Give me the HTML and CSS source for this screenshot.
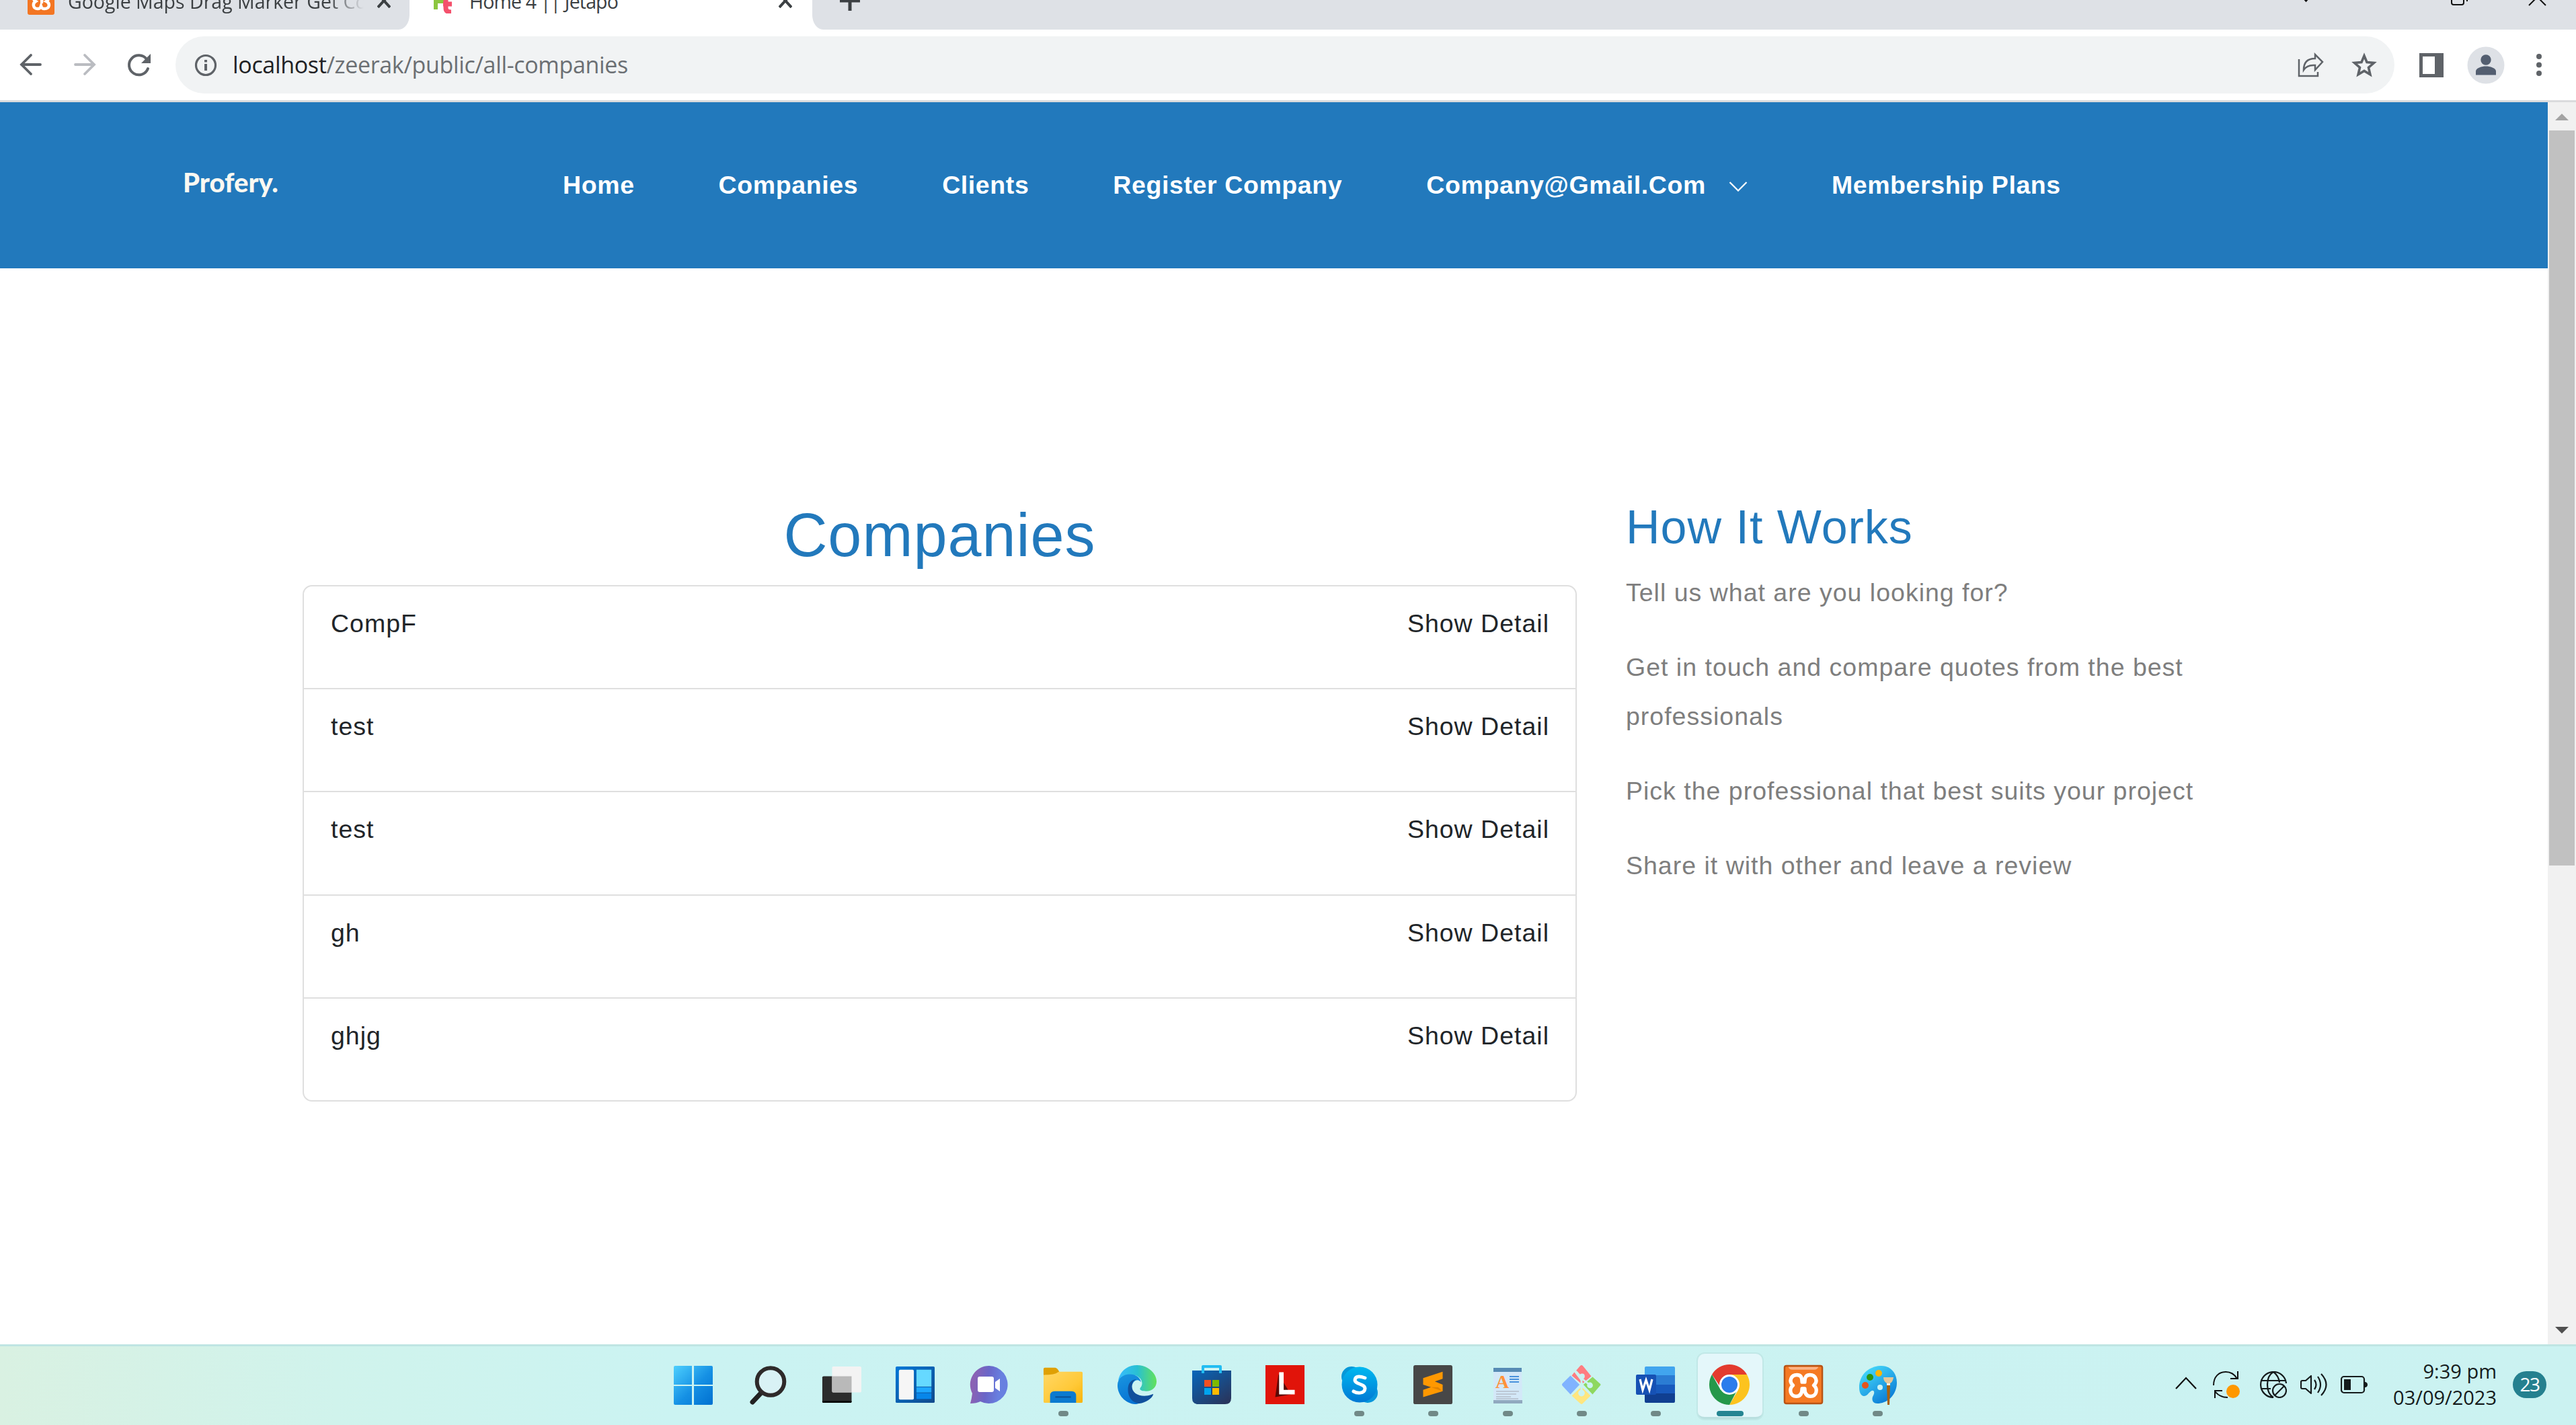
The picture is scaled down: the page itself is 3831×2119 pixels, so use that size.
FILE: index.html
```html
<!DOCTYPE html>
<html lang="en">
<head>
<meta charset="utf-8">
<title>Home 4 || Jetapo</title>
<link rel="stylesheet" href="styles.css">
</head>
<body>
<div class="screen">
  <div class="tabs">
    <div class="tab tab-first">
      <svg class="favicon" width="40" height="60" viewBox="0 0 40 60"><rect y="12" width="40" height="42" rx="3" fill="#f37623"/><path d="M19 35h2c1-8-1-12-6-12-7 0-8 8-3 11-5 3-4 11 3 11 3 0 4-1 5-4 1 3 2 4 5 4 8 0 9-8 3-11 5-3 4-11-3-11" fill="none" stroke="#fff" stroke-width="4.500"/></svg>
      <span class="tab-title fade">Google Maps Drag Marker Get Co</span>
      <svg class="tab-x" width="20" height="22" viewBox="0 0 20 22"><path d="M1 1l18 20M19 1L1 21" stroke="#3c4043" stroke-width="4"/></svg>
    </div>
    <div class="tab tab-active">
      <svg class="favicon jet" width="30" height="52" viewBox="0 0 30 52"><path d="M3 20v26M3 34h12" stroke="#8cc63f" stroke-width="6"/><path d="M18 18v26q0 6 8 6M14 38h13" fill="none" stroke="#f4516c" stroke-width="7"/></svg>
      <span class="tab-title">Home 4 || Jetapo</span>
      <svg class="tab-x" width="20" height="22" viewBox="0 0 20 22"><path d="M1 1l18 20M19 1L1 21" stroke="#3c4043" stroke-width="4"/></svg>
    </div>
    <div class="tab-rest">
      <svg class="plus" width="30" height="32" viewBox="0 0 30 32"><path d="M15 0v32M0 17h30" stroke="#3c4043" stroke-width="5"/></svg>
      <svg class="win-controls" width="360" height="10" viewBox="0 0 360 10"><path d="M0-4l4.500 5L9-4" fill="none" stroke="#111" stroke-width="3"/><path d="M221-5V4q0 3 3 3h12q3 0 3-3V-5M244-5V2" fill="none" stroke="#111" stroke-width="2"/><path d="M336 8L361-17M361 8L336-17" stroke="#111" stroke-width="2"/></svg>
    </div>
  </div>

  <div class="toolbar">
    <svg class="ico-back" width="34" height="34" viewBox="0 0 34 34"><path d="M31 17H3M17 3L3 17 17 31" fill="none" stroke="#5f6368" stroke-width="3.800" stroke-linecap="round"/></svg>
    <svg class="ico-fwd" width="34" height="34" viewBox="0 0 34 34"><path d="M3 17h28M17 3l14 14L17 31" fill="none" stroke="#babcc1" stroke-width="3.800" stroke-linecap="round"/></svg>
    <svg class="ico-reload" width="36" height="36" viewBox="0 0 36 36"><path d="M29 9A14.500 14.500 0 1 0 31 23" fill="none" stroke="#5f6368" stroke-width="4" stroke-linecap="round"/><path d="M35 1v14H21z" fill="#5f6368"/></svg>
    <div class="omnibox">
      <svg width="34" height="34" viewBox="0 0 34 34"><circle cx="17" cy="17" r="14.500" fill="none" stroke="#5f6368" stroke-width="3.200"/><path d="M17 15v10M17 9v3.500" stroke="#5f6368" stroke-width="4"/></svg>
      <span class="url"><b>localhost</b>/zeerak/public/all-companies</span>
      <svg class="ico-share" width="40" height="38" viewBox="0 0 40 38"><path d="M2 10v25h28v-6" fill="none" stroke="#5f6368" stroke-width="2.500"/><path d="M9 26Q9 9 26 9V3l11 11-11 12v-7Q14 18 9 26z" fill="none" stroke="#5f6368" stroke-width="2.500"/></svg>
      <svg class="ico-star" width="38" height="38" viewBox="0 0 38 38"><path d="M19 5l4 9.500 10.500 1-8 7 2.400 10.300L19 27.400l-8.900 5.400 2.400-10.300-8-7 10.500-1z" fill="none" stroke="#5f6368" stroke-width="3.600"/></svg>
    </div>
    <svg class="ico-panel" width="36" height="36" viewBox="0 0 36 36"><path d="M0 0h36v36H0zM5 5v26h18V5z" fill="#5f6368" fill-rule="evenodd"/></svg>
    <svg class="ico-user" width="56" height="56" viewBox="0 0 56 56"><circle cx="28" cy="28" r="27.500" fill="#dee1e6"/><circle cx="28" cy="20" r="7.700" fill="#535e70"/><path d="M13 42.500V37c0-5 9-7.500 15-7.500S43 32 43 37v5.500z" fill="#535e70"/></svg>
    <svg class="ico-menu" width="10" height="36" viewBox="0 0 10 36"><g fill="#5f6368"><circle cx="5" cy="5" r="4"/><circle cx="5" cy="17.500" r="4"/><circle cx="5" cy="30" r="4"/></g></svg>
  </div>

  <div class="viewport">
    <div class="page">
      <header class="site-header">
        <div class="logo">Profery.</div>
        <nav class="nav">
          <a>Home</a><a>Companies</a><a>Clients</a><a>Register Company</a>
          <a class="has-menu">Company@Gmail.Com<svg width="28" height="16" viewBox="0 0 28 16"><path d="M1.500 2L14 14.500 26.500 2" fill="none" stroke="#fff" stroke-width="2.200"/></svg></a>
          <a>Membership Plans</a>
        </nav>
      </header>
      <main class="content">
        <section class="companies">
          <h1>Companies</h1>
          <ul class="list">
            <li><span>CompF</span><a>Show Detail</a></li>
            <li><span>test</span><a>Show Detail</a></li>
            <li><span>test</span><a>Show Detail</a></li>
            <li><span>gh</span><a>Show Detail</a></li>
            <li><span>ghjg</span><a>Show Detail</a></li>
          </ul>
        </section>
        <aside class="how">
          <h2>How It Works</h2>
          <p>Tell us what are you looking for?</p>
          <p>Get in touch and compare quotes from the best professionals</p>
          <p>Pick the professional that best suits your project</p>
          <p>Share it with other and leave a review</p>
        </aside>
      </main>
    </div>
    <div class="scrollbar">
      <svg width="42" height="42" viewBox="0 0 42 42"><path d="M11 27L21 17l10 10z" fill="#a3a3a3"/></svg>
      <div class="thumb"></div>
      <svg class="down" width="42" height="42" viewBox="0 0 42 42"><path d="M11 16h20L21 26z" fill="#505050"/></svg>
    </div>
  </div>

  <div class="taskbar">
    <div class="apps">
      <div class="app"><svg viewBox="0 0 60 60"><defs><linearGradient id="win" x1="0" y1="0" x2="60" y2="60" gradientUnits="userSpaceOnUse"><stop offset="0" stop-color="#4fd2ff"/><stop offset=".55" stop-color="#1590e4"/><stop offset="1" stop-color="#0070d0"/></linearGradient></defs><path d="M3 2h25v28H1V4q0-2 2-2zM31 2h26q2 0 2 2v26H31zM1 32h27v28H3q-2 0-2-2zM31 32h28v26q0 2-2 2H31z" fill="url(#win)"/></svg></div>
      <div class="app"><svg viewBox="0 0 60 60"><path d="M23 40L8 56" stroke="#222" stroke-width="7" stroke-linecap="round"/><circle cx="35" cy="25.500" r="20.300" fill="#d9f2f5" stroke="#2e2a2a" stroke-width="6"/></svg></div>
      <div class="app"><svg viewBox="0 0 62 60"><rect x="2" y="17" width="45" height="41" rx="2" fill="#2c2c2c"/><path d="M2 55h45v1q0 2-2 2H4q-2 0-2-2z" fill="#080808"/><rect x="17" y="2" width="45" height="40" rx="2" fill="#f3f3f3"/><path d="M17 17h30v25H19q-2 0-2-2z" fill="#b9b9b9"/></svg></div>
      <div class="app"><svg viewBox="0 0 62 60"><defs><linearGradient id="wid" x2="1" y2="1"><stop stop-color="#0078d8"/><stop offset="1" stop-color="#124a8c"/></linearGradient></defs><rect x="1" y="2" width="60" height="56" rx="2" fill="url(#wid)"/><rect x="6" y="7" width="23" height="46" rx="2" fill="#f6f6f6"/><path d="M33 7h23v26H33z" fill="#66d9ff"/><path d="M33 34h23v8H33z" fill="#1ea7ff"/><path d="M33 43h23v9H33z" fill="#0786ea"/></svg></div>
      <div class="app"><svg viewBox="0 0 60 60"><defs><linearGradient id="chat" x1=".1" y1=".4" x2=".8" y2=".5"><stop stop-color="#8a62b4"/><stop offset=".5" stop-color="#6a66c8"/><stop offset="1" stop-color="#6880e0"/></linearGradient></defs><path d="M30 2a28 28 0 1 1-13 53q-6 3-15 3 2-7 3-15A28 28 0 0 1 30 2z" fill="url(#chat)"/><rect x="13" y="18" width="24" height="23" rx="3" fill="#fff"/><path d="M39 26l7-5v19l-7-5z" fill="#fff"/></svg></div>
      <div class="app run"><svg viewBox="0 0 62 60"><defs><linearGradient id="fold" x2="1" y2="1"><stop stop-color="#ffd766"/><stop offset=".6" stop-color="#ffc938"/><stop offset="1" stop-color="#f8b40c"/></linearGradient></defs><path d="M1 6q0-2 2-2h15q4 0 7 6v9H1z" fill="#dfa004"/><path d="M1 15q18 0 22-4 1-1 3-1h33q2 0 2 2v44q0 2-2 2H3q-2 0-2-2z" fill="url(#fold)"/><path d="M11 58V47q0-7 7-7h26q7 0 7 7v11z" fill="#0b7ad0"/><path d="M19 49h24" stroke="#0b4f94" stroke-width="2"/></svg></div>
      <div class="app"><svg viewBox="0 0 62 60"><defs><linearGradient id="eg" x2="1"><stop stop-color="#38bcff"/><stop offset=".5" stop-color="#29c0d2"/><stop offset="1" stop-color="#63e25a"/></linearGradient><linearGradient id="eb" x2=".4" y2="1"><stop stop-color="#1a96e0"/><stop offset="1" stop-color="#0673d3"/></linearGradient></defs><path d="M2 24C5 8 17 0 31 0c17 0 30 13 30 25 0 9-7 15-16 15-7 0-11-2-9-5 7-8 0-20-13-20C14 15 6 19 2 24z" fill="url(#eg)"/><path d="M1 31C1 20 10 14 20 14c9 0 16 5 17 12-5-7-14-1-14 8 0 12 11 21 22 18-6 6-12 8-17 8C13 59 1 46 1 31z" fill="url(#eb)"/><path d="M30 22c-8 0-13 6-13 15 0 13 7 21 17 22 11-1 20-8 22-14q0-1-2 0c-15 6-31 0-31-13q1-8 7-10z" fill="#10509c"/></svg></div>
      <div class="app"><svg viewBox="0 0 60 60"><defs><linearGradient id="st" x2=".8" y2="1"><stop stop-color="#0767bb"/><stop offset="1" stop-color="#28365e"/></linearGradient></defs><path d="M2 9h58v41q0 9-9 9H11q-9 0-9-9z" fill="url(#st)"/><path d="M18 13V3h26v10" fill="none" stroke="#22bdf2" stroke-width="4" stroke-linejoin="round"/><path d="M20 23h10v10H20z" fill="#f25022"/><path d="M32 23h10v10H32z" fill="#7fba00"/><path d="M20 35h10v10H20z" fill="#00a4ef"/><path d="M32 35h10v10H32z" fill="#ffb900"/></svg></div>
      <div class="app"><svg viewBox="0 0 62 60"><path d="M1 0h60v60H1z" fill="#e1140a"/><path d="M21 14l-5 35 24-4z" fill="#5c0805"/><path d="M22 11h7v27h17v7H22z" fill="#fff"/></svg></div>
      <div class="app run"><svg viewBox="0 0 60 60"><defs><linearGradient id="sk" x2="0" y2="1"><stop stop-color="#00b8f0"/><stop offset="1" stop-color="#0078d4"/></linearGradient></defs><circle cx="19" cy="18" r="15" fill="#0598d8"/><circle cx="43" cy="42" r="15" fill="#0797dc"/><circle cx="31" cy="30" r="26.500" fill="url(#sk)"/><path d="M39 20q-14-5-15 3c0 7 15 5 15 13-1 8-12 7-17 4" fill="none" stroke="#fff" stroke-width="5" stroke-linecap="round"/></svg></div>
      <div class="app run"><svg viewBox="0 0 62 60"><rect x="1" width="60" height="60" rx="3" fill="#474747"/><path d="M16 20l30-10v11l-12 4 12 5v10L16 49V38l12-4-12-4z" fill="#ff9800"/><path d="M28 34l18 6-7-6z" fill="#e28300"/></svg></div>
      <div class="app run"><svg viewBox="0 0 60 60"><path d="M9 5h42l1 50H9z" fill="#d3e8f8"/><path d="M9 5h42v6H9z" fill="#568bb4"/><path d="M9 53h43v5H9z" fill="#91a9bf"/><text x="12" y="35" class="wordpad">A</text><path d="M33 18h14M33 22h14M33 26h14" stroke="#4a91dc" stroke-width="2"/><path d="M13 40h34M13 44h30M13 48h22M13 51h33" stroke="#b5bdc9" stroke-width="1.500"/></svg></div>
      <div class="app run"><svg viewBox="0 0 62 60"><path d="M23 8l6-7q2-2 4 0l13 16-13 11-4-9z" fill="#ff7c80"/><path d="M20 11l10 13v4L16 16z" fill="#ff7c80"/><path d="M2 28l12-12 14 14-14 15L2 32q-2-2 0-4z" fill="#80b3ff"/><path d="M48 18l12 11q1 1 0 2L48 45 34 30z" fill="#8ed860"/><path d="M31 33l14 14-12 12q-2 2-4 0L16 47z" fill="#ffe680"/><path d="M23 10l8 9v25M32 21l11 9" fill="none" stroke="#cbf3f2" stroke-width="3"/><circle cx="31" cy="43" r="5" fill="#cbf3f2"/><circle cx="44" cy="31" r="4.500" fill="#cbf3f2"/><circle cx="32" cy="17" r="4" fill="#cbf3f2"/></svg></div>
      <div class="app run"><svg viewBox="0 0 60 60"><path d="M14 16V5q0-2 2-2h41q2 0 2 2v11z" fill="#41a5ee"/><path d="M14 16h45v14H14z" fill="#2b7cd3"/><path d="M14 30h45v13H14z" fill="#185abd"/><path d="M14 43h45v12q0 2-2 2H16q-2 0-2-2z" fill="#103f91"/><rect x="1" y="15" width="30" height="30" rx="2" fill="#1651b4"/><path d="M7 22l4 16 5-15 5 15 4-16" fill="none" stroke="#fff" stroke-width="3.200"/></svg></div>
      <div class="app run current"><svg viewBox="0 0 60 60"><path d="M30 0a30 30 0 0 1 26 15H30L17 34 4 15A30 30 0 0 1 30 0z" fill="#e33b2e"/><path d="M56 15a30 30 0 0 1-26 45L43 38 30 15z" fill="#fcc31e"/><path d="M4 15l13 23 24 1-11 21A30 30 0 0 1 4 15z" fill="#25984a"/><circle cx="30" cy="30" r="15" fill="#fff"/><circle cx="30" cy="30" r="12" fill="#2b7cec"/></svg></div>
      <div class="app run"><svg viewBox="0 0 62 60"><rect x="2" y="1" width="58" height="58" rx="3" fill="#f57a24" stroke="#b95314" stroke-width="2.500"/><path d="M8 3h46q-2 4-6 4H14q-5 0-6-4z" fill="#fbb487"/><path d="M21 15c-9 0-13 10-6 16-7 6-4 17 5 17 6 0 9-4 9-12h4c0 8 3 12 9 12 9 0 12-11 5-17 7-6 3-16-6-16-6 0-8 4-8 11h-4c0-7-2-11-8-11z" fill="none" stroke="#fff" stroke-width="5.500" stroke-linejoin="round"/></svg></div>
      <div class="app run"><svg viewBox="0 0 60 60"><defs><linearGradient id="pal" x2=".7" y2="1"><stop stop-color="#4ee6ff"/><stop offset="1" stop-color="#0a7bd6"/></linearGradient></defs><path d="M36 2c13 0 23 10 23 25C59 44 46 58 30 58c-8 0-9-7-6-12 3-6 0-9-4-6-4 3-5 7-10 7-4 0-7-5-7-13C3 15 18 2 36 2z" fill="url(#pal)"/><circle cx="32" cy="13" r="5" fill="#fbb508"/><circle cx="19" cy="19" r="5" fill="#2b9411"/><circle cx="12" cy="31" r="5" fill="#e5541b"/><circle cx="34" cy="34" r="4" fill="#ccf3f5"/><path d="M39 19h15q-1 7-5 9h-5q-5-3-5-9z" fill="#e5c698"/><path d="M44 28h5v3h-5z" fill="#eee"/><path d="M44 31h5l-1 29h-3z" fill="#a8610e"/></svg></div>
    </div>
    <div class="tray">
      <svg class="t-up" width="32" height="40" viewBox="0 0 32 40"><path d="M1 26L16 10l15 16" fill="none" stroke="#111" stroke-width="2.200"/></svg>
      <svg class="t-sync" width="40" height="40" viewBox="0 0 40 40"><path d="M1 21C1 8 9 1 19 1q11 0 17 10M37 0v11H26M3 40V29h11M3 30q7 9 19 9" fill="none" stroke="#111" stroke-width="2"/><circle cx="30" cy="30" r="10" fill="#ff9800"/></svg>
      <svg class="t-net" width="40" height="40" viewBox="0 0 40 40"><g fill="none" stroke="#151b1c" stroke-width="2.200"><path d="M39 18A19 19 0 1 0 20 39M2 14h36M2 26h14M20 39C8 32 8 8 20 1q8 6 9 16"/><circle cx="29" cy="29" r="10"/><path d="M22 36l14-14"/></g></svg>
      <svg class="t-vol" width="40" height="40" viewBox="0 0 40 40"><g fill="none" stroke="#151b1c" stroke-width="2.200"><path d="M1 16q0-2 2-2h5l8-7v26l-8-7H3q-2 0-2-2zM21 13q5 7 0 14M26 8q8 12 0 24M31 4q15 16 0 32" stroke-linejoin="round"/></g></svg>
      <svg class="t-bat" width="40" height="40" viewBox="0 0 40 40"><rect x="1" y="8" width="34" height="24" rx="4" fill="none" stroke="#151b1c" stroke-width="2.200"/><path d="M5 12h10v16H5zM35 16h2q3 1 3 4t-3 4h-2z" fill="#151b1c"/></svg>
      <div class="clock"><div>9:39 pm</div><div class="date">03/09/2023</div></div>
      <div class="count">23</div>
    </div>
  </div>
</div>
</body>
</html>
```
FILE: styles.css
```css
* { box-sizing: border-box; }
html, body { margin: 0; padding: 0; }
svg { display: block; flex: none; }
.screen {
  width: 3831px; height: 2119px; overflow: hidden;
  display: flex; flex-direction: column;
  background: #fff;
  font-family: "Liberation Sans", Arial, sans-serif;
}

/* browser tabs */
.tabs { height: 44px; flex: none; display: flex; align-items: flex-start; overflow: hidden; background: #fff; }
.tab { height: 44px; display: flex; align-items: flex-start; overflow: hidden; }
.tab-first { width: 609px; padding-left: 41px; background: #dee1e6; border-bottom-right-radius: 16px 22px; }
.tab-active { width: 599px; padding-left: 36px; }
.tab-rest { flex: 1; height: 44px; display: flex; background: #dee1e6; border-bottom-left-radius: 16px 22px; padding-left: 41px; overflow: hidden; }
.favicon { margin-top: -32px; }
.jet { margin-right: 10px; }
.tab-title {
  margin: -19px 0 0 20px; width: 440px; line-height: 42px; white-space: nowrap; overflow: hidden;
  font-family: "Open Sans", "Noto Sans", sans-serif; font-size: 28.5px; color: #3c4043;
}
.tab-active .tab-title { margin-left: 13px; width: 460px; letter-spacing: -.85px; }
.fade { -webkit-mask-image: linear-gradient(90deg, #000 88%, transparent); mask-image: linear-gradient(90deg, #000 88%, transparent); }
.tab-x { margin-top: -10px; margin-left: 20px; }
.tab-active .tab-x { margin-left: 0; }
.plus { margin-top: -16px; }
.win-controls { margin-left: 2146px; overflow: visible; }

/* address bar */
.toolbar { height: 108px; flex: none; display: flex; align-items: flex-start; padding-top: 10px; border-bottom: 3px solid #dadbdd; }
.ico-back { margin: 25px 0 0 29px; }
.ico-fwd { margin: 25px 0 0 46px; }
.ico-reload { margin: 25px 0 0 46px; }
.omnibox { width: 3300px; height: 85px; margin-left: 36px; padding: 0 26px 0 28px; display: flex; align-items: center; background: #f1f3f4; border-radius: 43px; }
.url { margin: -1px 0 0 23px; font-family: "Open Sans", "Noto Sans", sans-serif; font-size: 34px; letter-spacing: -.33px; color: #6b6f73; white-space: nowrap; }
.url b { font-weight: 400; color: #202124; }
.ico-share { margin-left: auto; }
.ico-star { margin-left: 40px; }
.ico-panel { margin: 25px 0 0 37px; }
.ico-user { margin: 15px 0 0 35px; }
.ico-menu { margin: 25px 0 0 46px; }

/* web page */
.viewport { height: 1847px; flex: none; display: flex; }
.page { width: 3789px; }
.site-header { height: 247px; padding-left: 272px; display: flex; align-items: center; background: #2279bc; color: #fff; }
.logo { width: 565px; margin-top: -9px; font-family: Lato, sans-serif; font-weight: 900; font-size: 40px; color: #faf8f2; }
.nav { display: flex; gap: 125px; margin-top: -2px; font-size: 37.5px; line-height: 60px; font-weight: 700; letter-spacing: .6px; white-space: nowrap; }
.has-menu { display: flex; align-items: center; }
.has-menu svg { margin: 4px 0 0 34px; }
.content { display: flex; padding: 343px 0 0 450px; font-size: 37.5px; line-height: 73px; letter-spacing: 1px; }
.companies { width: 1895px; }
h1, h2 { margin: 0; color: #2279bc; font-weight: 400; }
h1 { font-size: 90px; line-height: 108px; text-align: center; margin-bottom: 20px; }
.list { list-style: none; margin: 0; padding: 0; border: 2px solid #dfdfdf; border-radius: 14px; color: #212529; }
.list li { height: 153.2px; padding: 19px 39px 0 40px; display: flex; justify-content: space-between; border-bottom: 2px solid #dfdfdf; }
.list li:last-child { border-bottom: 0; height: 151.2px; }
.how { width: 900px; margin-left: 73px; color: #7e7e7e; }
h2 { font-size: 70px; line-height: 84px; margin-bottom: 19px; }
.how p { margin: 0 0 38px; }

.scrollbar { width: 42px; display: flex; flex-direction: column; align-items: center; background: #f1f1f1; }
.thumb { width: 38px; height: 1093px; background: #c1c1c1; }
.down { margin-top: auto; }

/* taskbar */
.taskbar {
  height: 120px; display: flex; justify-content: space-between;
  padding-left: 976px; border-top: 3px solid #bfe5e3;
  background: linear-gradient(90deg, #d9f1e2 0, #d0f3ec 13%, #cbf3f2 26%, #cbf2f1 100%);
}
.apps { display: flex; }
.app { position: relative; width: 110.05px; height: 117px; display: flex; justify-content: center; padding-top: 27px; }
.app > svg { width: 60px; height: 60px; z-index: 1; }
.run::after { content: ""; position: absolute; left: 48px; top: 96px; width: 15px; height: 8px; border-radius: 4px; background: #718987; z-index: 2; }
.current::before { content: ""; position: absolute; left: 8px; top: 11px; width: 96px; height: 94px; border-radius: 10px; background: #e4f7fa; border-bottom: 3px solid #b9dfdf; box-shadow: 0 0 0 2px #c1e8e7; }
.current::after { left: 36px; width: 40px; background: #248592; }
.wordpad { font: bold 28px "Liberation Serif", serif; fill: #ff9238; }
.tray { display: flex; align-items: flex-start; padding: 37px 44px 0 0; font-family: "Open Sans", "Noto Sans", sans-serif; color: #151b1c; }
.t-sync { margin-left: 24px; }
.t-net { margin-left: 30px; }
.t-vol { margin-left: 20px; }
.t-bat { margin-left: 20px; }
.clock { width: 192px; margin-top: -19px; text-align: right; font-size: 29px; line-height: 38.600px; }
.count { width: 50px; height: 40px; margin-left: 24px; border-radius: 20px; background: #25808f; color: #fff; text-align: center; font-size: 28px; line-height: 38px; letter-spacing: -1.500px; }
```
